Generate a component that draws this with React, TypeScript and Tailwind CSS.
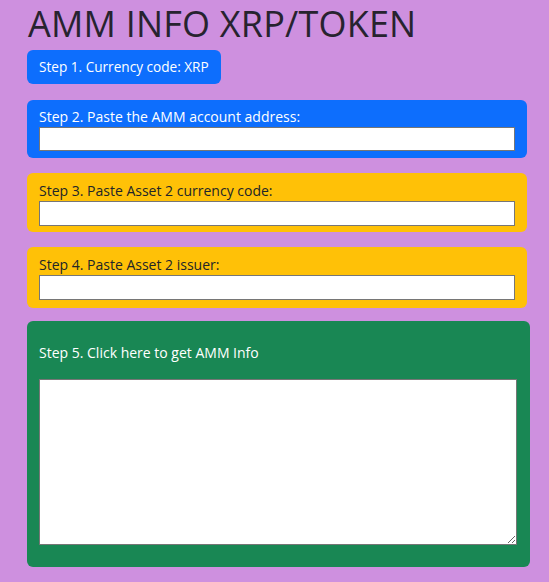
export default function App() {
  const font = { fontFamily: '"Open Sans", "Noto Sans", sans-serif' };
  return (
    <div className="min-h-[582px] bg-[#ce90df] pl-[27px] pt-[2px] text-[#212529]" style={font}>
      <h1 className="text-[36px] leading-[44px] font-medium tracking-[0.2px] text-[#27232f] pl-[1px]">AMM INFO XRP/TOKEN</h1>
      <div className="mt-[4px] inline-flex h-[34px] items-center rounded-[6px] bg-[#0d6efd] px-[12px] text-[13.6px] text-white">
        Step 1. Currency code: XRP
      </div>
      <div className="mt-[16px] w-[500px] rounded-[6px] bg-[#0d6efd] px-[12px] pt-[7px] pb-[7px] text-white">
        <div className="text-[14px] leading-[20px]">Step 2. Paste the AMM account address:</div>
        <input className="block h-[24px] w-[476px] border border-[#767676] bg-white" />
      </div>
      <div className="mt-[15px] w-[500px] rounded-[6px] bg-[#ffc107] px-[12px] pt-[7px] pb-[6px]">
        <div className="text-[14px] leading-[21px]">Step 3. Paste Asset 2 currency code:</div>
        <input className="block h-[25px] w-[476px] border border-[#767676] bg-white" />
      </div>
      <div className="mt-[15px] w-[500px] rounded-[6px] bg-[#ffc107] px-[12px] pt-[7px] pb-[8px]">
        <div className="text-[14px] leading-[21px]">Step 4. Paste Asset 2 issuer:</div>
        <input className="block h-[25px] w-[476px] border border-[#767676] bg-white" />
      </div>
      <div className="mt-[13px] w-[503px] rounded-[6px] bg-[#198754] px-[12px] pt-[22px] pb-[22px] text-white">
        <div className="text-[14px] leading-[20px]">Step 5. Click here to get AMM Info</div>
        <textarea className="mt-[16px] block h-[166px] w-[478px] border border-[#767676] bg-white" />
      </div>
    </div>
  );
}
